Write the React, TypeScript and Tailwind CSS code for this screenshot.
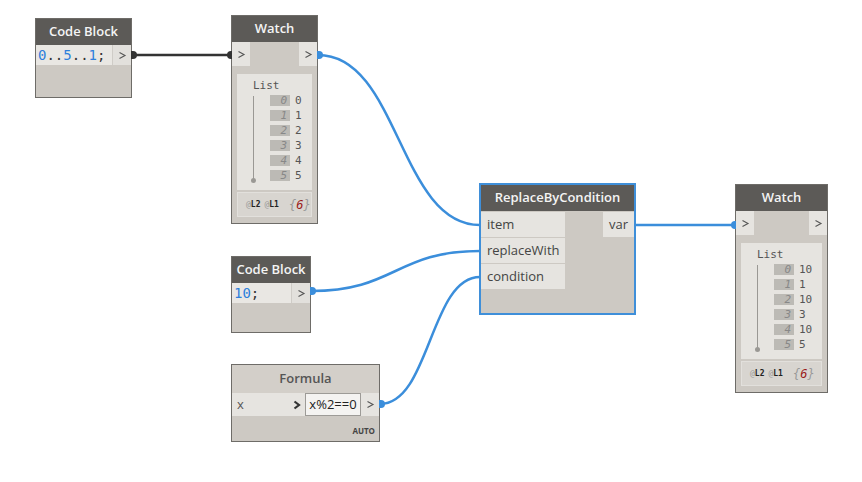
import React from "react";

const sans = { fontFamily: '"Open Sans", "Noto Sans", sans-serif' };
const mono = { fontFamily: '"DejaVu Sans Mono", "Liberation Mono", monospace' };

function Header({ title }: { title: string }) {
  return (
    <div
      className="h-[26px] bg-[#5c5a57] text-[#f4f4f4] text-[13px] font-semibold flex items-center justify-center shrink-0"
      style={sans}
    >
      {title}
    </div>
  );
}

function Chevron({ cls = "" }: { cls?: string }) {
  return (
    <svg width="9" height="9" viewBox="0 0 9 9" className={cls}>
      <path d="M1.5 1.5 L7 4.5 L1.5 7.5" fill="none" stroke="#555" strokeWidth="1.1" />
    </svg>
  );
}

function CodeBlock({
  left,
  top,
  width,
  height,
  code,
}: {
  left: number;
  top: number;
  width: number;
  height: number;
  code: React.ReactNode;
}) {
  return (
    <div
      className="absolute border border-[#6e6c68] bg-[#cdc9c3] flex flex-col"
      style={{ left, top, width, height }}
    >
      <Header title="Code Block" />
      <div className="flex h-[20px]">
        <div className="flex-1 bg-[#e9e7e3] pl-[2px] text-[14px] leading-[20px] text-[#2e7fdc]" style={mono}>
          {code}
        </div>
        <div className="w-[19px] bg-[#e2e0dc] border-l border-[#cfccc7] flex items-center justify-center">
          <Chevron />
        </div>
      </div>
    </div>
  );
}

function Watch({
  left,
  top,
  width,
  height,
  values,
}: {
  left: number;
  top: number;
  width: number;
  height: number;
  values: string[];
}) {
  return (
    <div
      className="absolute border border-[#6e6c68] bg-[#cdc9c3] flex flex-col"
      style={{ left, top, width, height }}
    >
      <Header title="Watch" />
      <div className="flex justify-between h-[24px]">
        <div className="w-[18px] bg-[#e6e4e0] flex items-center justify-center">
          <Chevron />
        </div>
        <div className="w-[18px] bg-[#e6e4e0] flex items-center justify-center">
          <Chevron />
        </div>
      </div>
      <div className="flex-1 flex flex-col px-[5px] pt-[8px] pb-[6px] gap-[2px]">
        <div className="flex-1 bg-[#e6e4e0] relative" style={mono}>
          <div className="absolute left-[16px] top-[6px] text-[11px] leading-[12px] text-[#555]">List</div>
          <div className="absolute left-[16px] top-[22px] w-px h-[84px] bg-[#9a9894]" />
          <div className="absolute left-[14px] top-[104px] w-[5px] h-[5px] rounded-full bg-[#9a9894]" />
          <div className="absolute left-[33px] top-[21px] flex flex-col gap-[4px]">
            {values.map((v, i) => (
              <div key={i} className="flex items-center h-[11px]">
                <div className="w-[20px] h-[11px] bg-[#bcbab5] text-[11px] leading-[11px] italic text-[#888] text-right pr-[3px]">
                  {i}
                </div>
                <div className="ml-[5px] text-[11px] leading-[11px] text-[#555]">{v}</div>
              </div>
            ))}
          </div>
        </div>
        <div className="h-[25px] bg-[#d8d5d0] border border-[#e2e0dc] flex items-center pl-[8px] gap-[4px]" style={mono}>
          <span className="text-[8px] font-bold text-[#222]">
            <span className="text-[#999] font-normal">@</span>L2
          </span>
          <span className="text-[8px] font-bold text-[#222]">
            <span className="text-[#999] font-normal">@</span>L1
          </span>
          <span className="ml-[6px] text-[12px] italic text-[#999]">
            {"{"}
            <span className="text-[#9b1b1b]">6</span>
            {"}"}
          </span>
        </div>
      </div>
    </div>
  );
}

function Wires() {
  const blue = "#3b8edb";
  const curve = (x1: number, y1: number, x2: number, y2: number) => {
    const dx = (x2 - x1) / 2;
    return `M${x1} ${y1} C${x1 + dx} ${y1}, ${x2 - dx} ${y2}, ${x2} ${y2}`;
  };
  const srcTab = (x: number, y: number, c: string) => (
    <path d={`M${x} ${y - 4} L${x + 2} ${y - 4} A4 4 0 0 1 ${x + 2} ${y + 4} L${x} ${y + 4} Z`} fill={c} />
  );
  const dstTab = (x: number, y: number, c: string) => (
    <path d={`M${x} ${y - 4} L${x - 1} ${y - 4} A4 4 0 0 0 ${x - 1} ${y + 4} L${x} ${y + 4} Z`} fill={c} />
  );
  return (
    <svg className="absolute left-0 top-0" width="862" height="482">
      <path d="M132 55 L231 55" stroke="#333" strokeWidth="2.5" fill="none" />
      {srcTab(131, 55, "#333")}
      {dstTab(232, 55, "#333")}
      <path d={curve(318, 55, 480, 225)} stroke={blue} strokeWidth="2.5" fill="none" />
      {srcTab(317, 55, blue)}
      <path d={curve(311, 291, 480, 251)} stroke={blue} strokeWidth="2.5" fill="none" />
      {srcTab(310, 291, blue)}
      <path d={curve(380, 404, 480, 277)} stroke={blue} strokeWidth="2.5" fill="none" />
      {srcTab(379, 404, blue)}
      <path d="M636 225 L735 225" stroke={blue} strokeWidth="2.5" fill="none" />
      {dstTab(736, 225, blue)}
    </svg>
  );
}

function ReplaceNode() {
  const rows = ["item", "replaceWith", "condition"];
  return (
    <div
      className="absolute border-2 border-[#3f8fd9] bg-[#cdc9c3] flex flex-col"
      style={{ left: 479, top: 183, width: 157, height: 132 }}
    >
      <Header title="ReplaceByCondition" />
      <div className="flex justify-between pt-[1px]">
        <div className="w-[84px] flex flex-col gap-[1px]">
          {rows.map((r) => (
            <div
              key={r}
              className="h-[25px] bg-[#e6e4e0] pl-[6px] text-[13px] leading-[25px] text-[#444]"
              style={sans}
            >
              {r}
            </div>
          ))}
        </div>
        <div
          className="w-[31px] h-[25px] bg-[#e6e4e0] text-[13px] leading-[25px] text-[#444] text-center"
          style={sans}
        >
          var
        </div>
      </div>
    </div>
  );
}

function Formula() {
  return (
    <div
      className="absolute border border-[#6e6c68] bg-[#cdc9c3] flex flex-col"
      style={{ left: 231, top: 364, width: 149, height: 78 }}
    >
      <div
        className="h-[28px] bg-[#d3cfc9] text-[#555] text-[13px] font-semibold flex items-center justify-center"
        style={sans}
      >
        Formula
      </div>
      <div className="h-[23px] bg-[#e6e4e0] flex items-center" style={sans}>
        <div className="flex-1 pl-[5px] text-[13px] text-[#555]">x</div>
        <svg width="8" height="10" viewBox="0 0 8 10" className="mr-[4px]">
          <path d="M1.5 1.5 L6 5 L1.5 8.5" fill="none" stroke="#333" strokeWidth="2.2" />
        </svg>
        <div className="w-[56px] h-[23px] bg-[#f4f3f1] border border-[#9d9b97] text-[13px] leading-[21px] text-[#222] text-center">
          x%2==0
        </div>
        <div className="w-[18px] flex items-center justify-center">
          <Chevron />
        </div>
      </div>
      <div className="flex-1 flex items-end justify-end pr-[4px] pb-[4px]">
        <span className="text-[8px] font-bold text-[#444]" style={sans}>
          AUTO
        </span>
      </div>
    </div>
  );
}

export default function App() {
  return (
    <div className="relative w-[862px] h-[482px] bg-white overflow-hidden">
      <CodeBlock
        left={35}
        top={18}
        width={97}
        height={80}
        code={
          <>
            0<span className="text-[#333]">..</span>5<span className="text-[#333]">..</span>1<span className="text-[#333]">;</span>
          </>
        }
      />
      <Watch left={231} top={15} width={87} height={209} values={["0", "1", "2", "3", "4", "5"]} />
      <CodeBlock
        left={231}
        top={256}
        width={80}
        height={77}
        code={
          <>
            10<span className="text-[#333]">;</span>
          </>
        }
      />
      <Formula />
      <ReplaceNode />
      <Watch left={735} top={184} width={93} height={209} values={["10", "1", "10", "3", "10", "5"]} />
      <Wires />
    </div>
  );
}
